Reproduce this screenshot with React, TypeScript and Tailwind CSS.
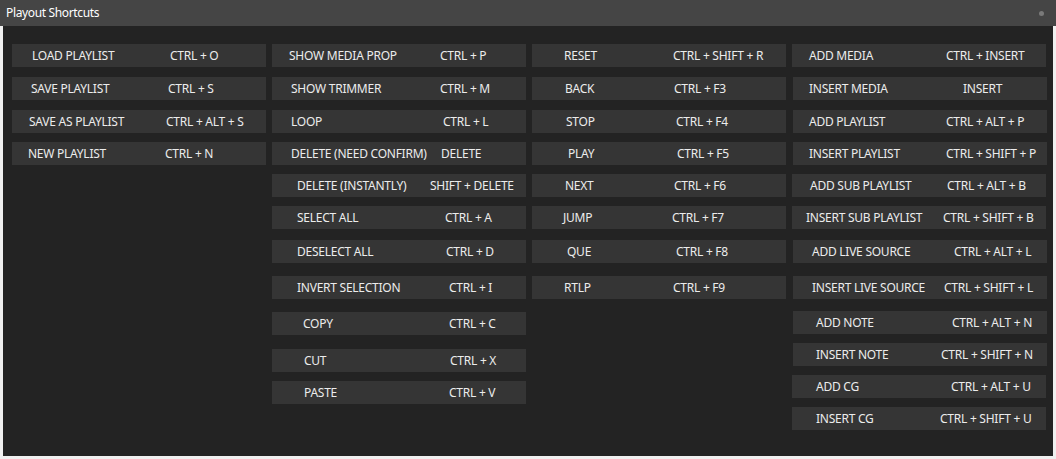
type TShortcut = {
  label: string,
  keys: string,
  top: string,
  pad: string,
  w: string,
  shift?: string
}

const columns: TShortcut[][] = [
  [
    { label: "LOAD PLAYLIST", keys: "CTRL + O", top: "mt-0", pad: "pl-[20px]", w: "w-[138px]" },
    { label: "SAVE PLAYLIST", keys: "CTRL + S", top: "mt-[10px]", pad: "pl-[19px]", w: "w-[137px]" },
    { label: "SAVE AS PLAYLIST", keys: "CTRL + ALT + S", top: "mt-[10px]", pad: "pl-[17px]", w: "w-[137px]" },
    { label: "NEW PLAYLIST", keys: "CTRL + N", top: "mt-[9px]", pad: "pl-[16px]", w: "w-[137px]" },
  ],
  [
    { label: "SHOW MEDIA PROP", keys: "CTRL + P", top: "mt-0", pad: "pl-[17px]", w: "w-[151px]" },
    { label: "SHOW TRIMMER", keys: "CTRL + M", top: "mt-[10px]", pad: "pl-[19px]", w: "w-[149px]" },
    { label: "LOOP", keys: "CTRL + L", top: "mt-[10px]", pad: "pl-[19px]", w: "w-[152px]" },
    { label: "DELETE (NEED CONFIRM)", keys: "DELETE", top: "mt-[9px]", pad: "pl-[19px]", w: "w-[150px]" },
    { label: "DELETE (INSTANTLY)", keys: "SHIFT + DELETE", top: "mt-[9px]", pad: "pl-[25px]", w: "w-[133px]" },
    { label: "SELECT ALL", keys: "CTRL + A", top: "mt-[9px]", pad: "pl-[25px]", w: "w-[148px]" },
    { label: "DESELECT ALL", keys: "CTRL + D", top: "mt-[11px]", pad: "pl-[25px]", w: "w-[149px]" },
    { label: "INVERT SELECTION", keys: "CTRL + I", top: "mt-[13px]", pad: "pl-[25px]", w: "w-[152px]" },
    { label: "COPY", keys: "CTRL + C", top: "mt-[13px]", pad: "pl-[31px]", w: "w-[146px]" },
    { label: "CUT", keys: "CTRL + X", top: "mt-[14px]", pad: "pl-[32px]", w: "w-[146px]" },
    { label: "PASTE", keys: "CTRL + V", top: "mt-[9px]", pad: "pl-[32px]", w: "w-[145px]" },
  ],
  [
    { label: "RESET", keys: "CTRL + SHIFT + R", top: "mt-0", pad: "pl-[32px]", w: "w-[109px]" },
    { label: "BACK", keys: "CTRL + F3", top: "mt-[10px]", pad: "pl-[33px]", w: "w-[109px]" },
    { label: "STOP", keys: "CTRL + F4", top: "mt-[10px]", pad: "pl-[34px]", w: "w-[110px]" },
    { label: "PLAY", keys: "CTRL + F5", top: "mt-[9px]", pad: "pl-[36px]", w: "w-[109px]" },
    { label: "NEXT", keys: "CTRL + F6", top: "mt-[9px]", pad: "pl-[33px]", w: "w-[109px]" },
    { label: "JUMP", keys: "CTRL + F7", top: "mt-[9px]", pad: "pl-[31px]", w: "w-[109px]" },
    { label: "QUE", keys: "CTRL + F8", top: "mt-[11px]", pad: "pl-[35px]", w: "w-[109px]" },
    { label: "RTLP", keys: "CTRL + F9", top: "mt-[13px]", pad: "pl-[32px]", w: "w-[109px]" },
  ],
  [
    { label: "ADD MEDIA", keys: "CTRL + INSERT", top: "mt-0", pad: "pl-[17px]", w: "w-[137px]" },
    { label: "INSERT MEDIA", keys: "INSERT", top: "mt-[10px]", pad: "pl-[16px]", w: "w-[154px]", shift: "ml-px" },
    { label: "ADD PLAYLIST", keys: "CTRL + ALT + P", top: "mt-[10px]", pad: "pl-[16px]", w: "w-[137px]", shift: "ml-px" },
    { label: "INSERT PLAYLIST", keys: "CTRL + SHIFT + P", top: "mt-[9px]", pad: "pl-[16px]", w: "w-[137px]", shift: "ml-px" },
    { label: "ADD SUB PLAYLIST", keys: "CTRL + ALT + B", top: "mt-[9px]", pad: "pl-[18px]", w: "w-[137px]" },
    { label: "INSERT SUB PLAYLIST", keys: "CTRL + SHIFT + B", top: "mt-[9px]", pad: "pl-[14px]", w: "w-[137px]" },
    { label: "ADD LIVE SOURCE", keys: "CTRL + ALT + L", top: "mt-[11px]", pad: "pl-[19px]", w: "w-[142px]", shift: "ml-px" },
    { label: "INSERT LIVE SOURCE", keys: "CTRL + SHIFT + L", top: "mt-[13px]", pad: "pl-[19px]", w: "w-[132px]", shift: "ml-px" },
    { label: "ADD NOTE", keys: "CTRL + ALT + N", top: "mt-[12px]", pad: "pl-[23px]", w: "w-[136px]", shift: "ml-px" },
    { label: "INSERT NOTE", keys: "CTRL + SHIFT + N", top: "mt-[9px]", pad: "pl-[23px]", w: "w-[125px]", shift: "ml-px" },
    { label: "ADD CG", keys: "CTRL + ALT + U", top: "mt-[9px]", pad: "pl-[24px]", w: "w-[135px]" },
    { label: "INSERT CG", keys: "CTRL + SHIFT + U", top: "mt-[9px]", pad: "pl-[24px]", w: "w-[124px]" },
  ],
]

function ShortcutButton({ item }: { item: TShortcut }) {
  return (
    <div className={`flex h-[23px] w-[254px] items-center bg-[#353535] ${item.top} ${item.pad} ${item.shift ?? ""}`}>
      <span className={`shrink-0 whitespace-nowrap ${item.w}`}>{item.label}</span>
      <span className="whitespace-nowrap">{item.keys}</span>
    </div>
  )
}

export default function App() {
  return (
    <div className="h-[459px] w-[1056px] overflow-hidden bg-[#f0f0f0] font-['Noto_Sans',sans-serif] text-[12px] tracking-[-0.25px] text-[#ececec]">
      <div className="flex h-[26px] items-center justify-between bg-[#454545] pl-[6px] pr-[12px]">
        <span className="text-[12px] tracking-[-0.35px] text-white">Playout Shortcuts</span>
        <span className="h-[5px] w-[5px] rounded-full bg-[#7a7a7a]" />
      </div>

      <div className="ml-[3px] flex h-[430px] w-[1050px] gap-[6px] bg-[#232323] pl-[9px] pt-[18px]">
        {columns.map((col, i) => (
          <div key={i} className="flex w-[254px] flex-col">
            {col.map((item) => (
              <ShortcutButton key={item.label} item={item} />
            ))}
          </div>
        ))}
      </div>
    </div>
  );
}
